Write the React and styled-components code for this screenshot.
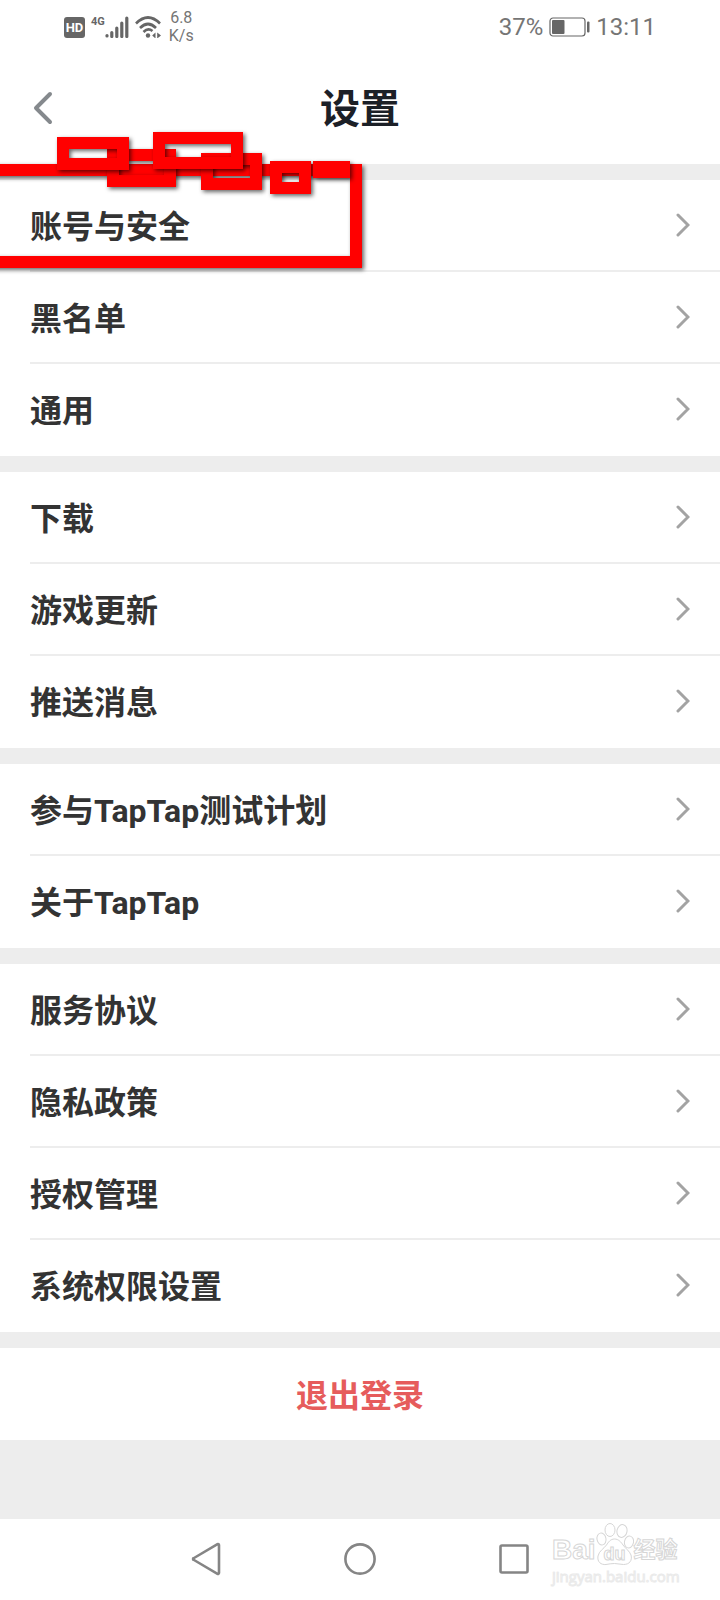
import styled, { createGlobalStyle } from 'styled-components';

const GlobalStyle = createGlobalStyle`
    body {
        margin: 0;
        background: #EDEDED;
        font-family: Roboto, "Noto Sans CJK SC", sans-serif;
    }
`;

const Page = styled.div`
    position: relative;
    display: flex;
    flex-direction: column;
    min-height: 100vh;
    overflow: hidden;
    background: #EDEDED;
`;

const StatusBar = styled.div`
    display: flex;
    align-items: center;
    justify-content: space-between;
    height: 52px;
    padding: 2px 64px 0;
    box-sizing: border-box;
    background: #FFFFFF;
    color: #666666;
`;

const StatusGroup = styled.div`
    display: flex;
    align-items: center;
    gap: ${props => props.$gap}px;
`;

const HdBadge = styled.span`
    width: 21px;
    height: 21px;
    border-radius: 3px;
    background: #666666;
    color: #FFFFFF;
    font-size: 13px;
    font-weight: 700;
    line-height: 21px;
    text-align: center;
`;

const Network = styled.span`
    align-self: flex-start;
    font-size: 11px;
    font-weight: 700;
    line-height: 12px;
`;

const Speed = styled.span`
    display: flex;
    flex-direction: column;
    align-items: center;
    margin-left: 2px;
    font-size: 16px;
    line-height: 18px;
    color: #757575;
`;

const StatusText = styled.span`
    font-size: 24px;
    font-weight: 400;
    line-height: 28px;
    color: #757575;
`;

const Header = styled.header`
    display: grid;
    grid-template-columns: 1fr auto 1fr;
    align-items: center;
    height: 112px;
    padding: 0 30px;
    background: #FFFFFF;
`;

const BackButton = styled.button`
    display: flex;
    justify-self: start;
    padding: 0;
    border: 0;
    background: none;
    color: #85898D;
`;

const Title = styled.h1`
    margin: 0;
    padding-top: 4px;
    font-size: 40px;
    font-weight: 700;
    line-height: 48px;
    color: #1C2027;
`;

const Settings = styled.main`
    flex: 1;
`;

const Group = styled.ul`
    margin: 16px 0 0;
    padding: 0;
    list-style: none;
    background: #FFFFFF;
`;

const Item = styled.li`
    margin-left: 30px;
    border-bottom: 2px solid #EDEDED;

    &:last-child {
        border-color: #FFFFFF;
    }
`;

const ItemLink = styled.a`
    display: flex;
    align-items: center;
    justify-content: space-between;
    height: 90px;
    padding-right: 30px;
    font-size: 32px;
    font-weight: 700;
    line-height: 40px;
    color: #333333;
    text-decoration: none;
`;

const ItemText = styled.span`
    padding-top: 4px;
`;

const LogoutButton = styled.button`
    display: block;
    width: 100%;
    height: 92px;
    margin-top: 16px;
    padding: 4px 0 0;
    border: 0;
    background: #FFFFFF;
    color: #E65C5C;
    font-family: inherit;
    font-size: 32px;
    font-weight: 700;
    line-height: 40px;
`;

const NavBar = styled.nav`
    display: grid;
    grid-template-columns: repeat(3, 1fr);
    height: 81px;
    padding: 0 18% 2px;
    box-sizing: border-box;
    background: #FFFFFF;
`;

const NavButton = styled.button`
    display: flex;
    align-items: center;
    justify-content: center;
    padding: 0;
    border: 0;
    background: none;
    color: #858585;
`;

const Marks = styled.svg`
    position: absolute;
    top: 120px;
    left: 0;
    pointer-events: none;

    rect {
        fill: none;
        stroke: #FF0000;
        stroke-width: 12px;
        filter: drop-shadow(2px 2px 2px rgba(0, 0, 0, 0.6));
    }
`;

const Watermark = styled.div`
    position: absolute;
    right: 38px;
    bottom: 14px;
    width: 130px;
    color: #FFFFFF;
    font-family: "Liberation Sans", "Noto Sans CJK SC", sans-serif;
    -webkit-text-stroke: 1px #D6D6D6;
    pointer-events: none;
`;

const Brand = styled.div`
    display: flex;
    align-items: flex-end;
    height: 44px;
    font-weight: 700;
    line-height: 32px;
`;

const BrandName = styled.span`
    font-size: ${props => props.$size}px;
`;

const Paw = styled.span`
    position: relative;
    display: flex;
    width: 38px;
    height: 44px;
`;

const PawText = styled.span`
    position: absolute;
    right: 0;
    bottom: 0;
    left: 0;
    font-size: 18px;
    line-height: 24px;
    text-align: center;
`;

const Site = styled.div`
    font-family: "Open Sans", sans-serif;
    font-size: 15px;
    line-height: 20px;
    -webkit-text-stroke-color: #EAEAEA;
`;

const groups = [
    ['账号与安全', '黑名单', '通用'],
    ['下载', '游戏更新', '推送消息'],
    ['参与TapTap测试计划', '关于TapTap'],
    ['服务协议', '隐私政策', '授权管理', '系统权限设置'],
];

// ordered bottom to top, coordinates are the middle of the 12px stroke
const marks = [
    { x: -20, y: 50, width: 376, height: 92 },
    { x: 113, y: 35, width: 57, height: 26 },
    { x: 63, y: 23, width: 60, height: 21 },
    { x: 207, y: 39, width: 49, height: 25 },
    { x: 159, y: 18, width: 78, height: 25 },
    { x: 276, y: 47, width: 29, height: 21 },
    { x: 319, y: 47, width: 25, height: 5 },
];

const Signal = () => (
    <svg width="24" height="22" viewBox="0 0 24 22" fill="none" stroke="currentColor" strokeWidth="3.2" strokeLinecap="round">
        <path d="M2 19.5v.5M6.800 16.500v4M11.800 12v8.500M16.800 7v13.500M21.800 2v18.500" />
    </svg>
);

const Wifi = () => (
    <svg width="26" height="22" viewBox="0 0 26 22" fill="none" stroke="currentColor" strokeWidth="2.6">
        <path d="M1 7.500Q13-4.500 25 7.500M5 12Q13 4 21 12M8.500 16Q13 11.500 17.500 15" />
        <circle cx="13" cy="19.500" r="2.200" fill="currentColor" stroke="none" />
        <path d="M17.200 19.500l3.300-3v6zM26 19.500l-3.800-3v6z" fill="currentColor" stroke="none" />
    </svg>
);

const Battery = () => (
    <svg width="41" height="20" viewBox="0 0 41 20" fill="none">
        <rect x="1" y="1" width="35" height="18" rx="3" stroke="currentColor" strokeWidth="1.200" />
        <rect x="3" y="3" width="12.500" height="14" rx="1" fill="currentColor" />
        <rect x="38" y="4.500" width="2.500" height="11" rx="1" fill="currentColor" />
    </svg>
);

const Chevron = () => (
    <svg width="16" height="26" viewBox="0 0 16 26" fill="none" stroke="#A3A3A3" strokeWidth="3" strokeLinecap="round">
        <path d="M4 3l10 10L4 23" />
    </svg>
);

export default () => (
    <Page>
        <GlobalStyle />
        <StatusBar>
            <StatusGroup $gap={6}>
                <HdBadge>HD</HdBadge>
                <StatusGroup $gap={0}>
                    <Network>4G</Network>
                    <Signal />
                </StatusGroup>
                <Wifi />
                <Speed>
                    <span>6.8</span>
                    <span>K/s</span>
                </Speed>
            </StatusGroup>
            <StatusGroup $gap={6}>
                <StatusText>37%</StatusText>
                <Battery />
                <StatusText>13:11</StatusText>
            </StatusGroup>
        </StatusBar>
        <Header>
            <BackButton type="button" aria-label="返回">
                <svg width="24" height="36" viewBox="0 0 24 36" fill="none" stroke="currentColor" strokeWidth="4" strokeLinecap="round" strokeLinejoin="round">
                    <path d="M20 4L6 18l14 14" />
                </svg>
            </BackButton>
            <Title>设置</Title>
        </Header>
        <Settings>
            {groups.map(items => (
                <Group key={items[0]}>
                    {items.map(item => (
                        <Item key={item}>
                            <ItemLink href="#">
                                <ItemText>{item}</ItemText>
                                <Chevron />
                            </ItemLink>
                        </Item>
                    ))}
                </Group>
            ))}
            <LogoutButton type="button">退出登录</LogoutButton>
        </Settings>
        <NavBar>
            <NavButton type="button" aria-label="后退">
                <svg width="30" height="34" viewBox="0 0 30 34" fill="none" stroke="currentColor" strokeWidth="2.600" strokeLinejoin="round">
                    <path d="M28 3v28a1 1 0 0 1-1.500.8L3 18a1 1 0 0 1 0-2L26.500 2.200A1 1 0 0 1 28 3z" />
                </svg>
            </NavButton>
            <NavButton type="button" aria-label="主页">
                <svg width="32" height="32" viewBox="0 0 32 32" fill="none" stroke="currentColor" strokeWidth="2.600">
                    <circle cx="16" cy="16" r="14.600" />
                </svg>
            </NavButton>
            <NavButton type="button" aria-label="最近任务">
                <svg width="30" height="30" viewBox="0 0 30 30" fill="none" stroke="currentColor" strokeWidth="2.600">
                    <rect x="1.500" y="1.500" width="27" height="27" rx="1.500" />
                </svg>
            </NavButton>
        </NavBar>
        <Marks width="380" height="170" viewBox="0 0 380 170" aria-hidden="true">
            {marks.map(mark => <rect key={`mark_${mark.x}`} {...mark} />)}
        </Marks>
        <Watermark>
            <Brand>
                <BrandName $size={28}>Bai</BrandName>
                <Paw>
                    <svg width="38" height="44" viewBox="0 0 38 44" fill="#FFFFFF" stroke="#D6D6D6">
                        <ellipse cx="5.500" cy="17" rx="4.500" ry="6" transform="rotate(-12 5.500 17)" />
                        <ellipse cx="14" cy="8" rx="5" ry="6.500" />
                        <ellipse cx="26" cy="9" rx="5" ry="6.500" transform="rotate(12 26 9)" />
                        <ellipse cx="33" cy="20" rx="4.500" ry="6" transform="rotate(12 33 20)" />
                        <path d="M18.500 17c-4 0-6 3-8 6-3 4-7.500 6-8.500 11-1 6 3 9 8 8.500 3-.5 5.500-1 8.500-1s6 1 9 1c6 0 9-4 7.500-9.500-1.500-4-5.500-6.500-8-10-2-3-4.500-6-8.500-6z" />
                    </svg>
                    <PawText>du</PawText>
                </Paw>
                <BrandName $size={22}>经验</BrandName>
            </Brand>
            <Site>jingyan.baidu.com</Site>
        </Watermark>
    </Page>
);
